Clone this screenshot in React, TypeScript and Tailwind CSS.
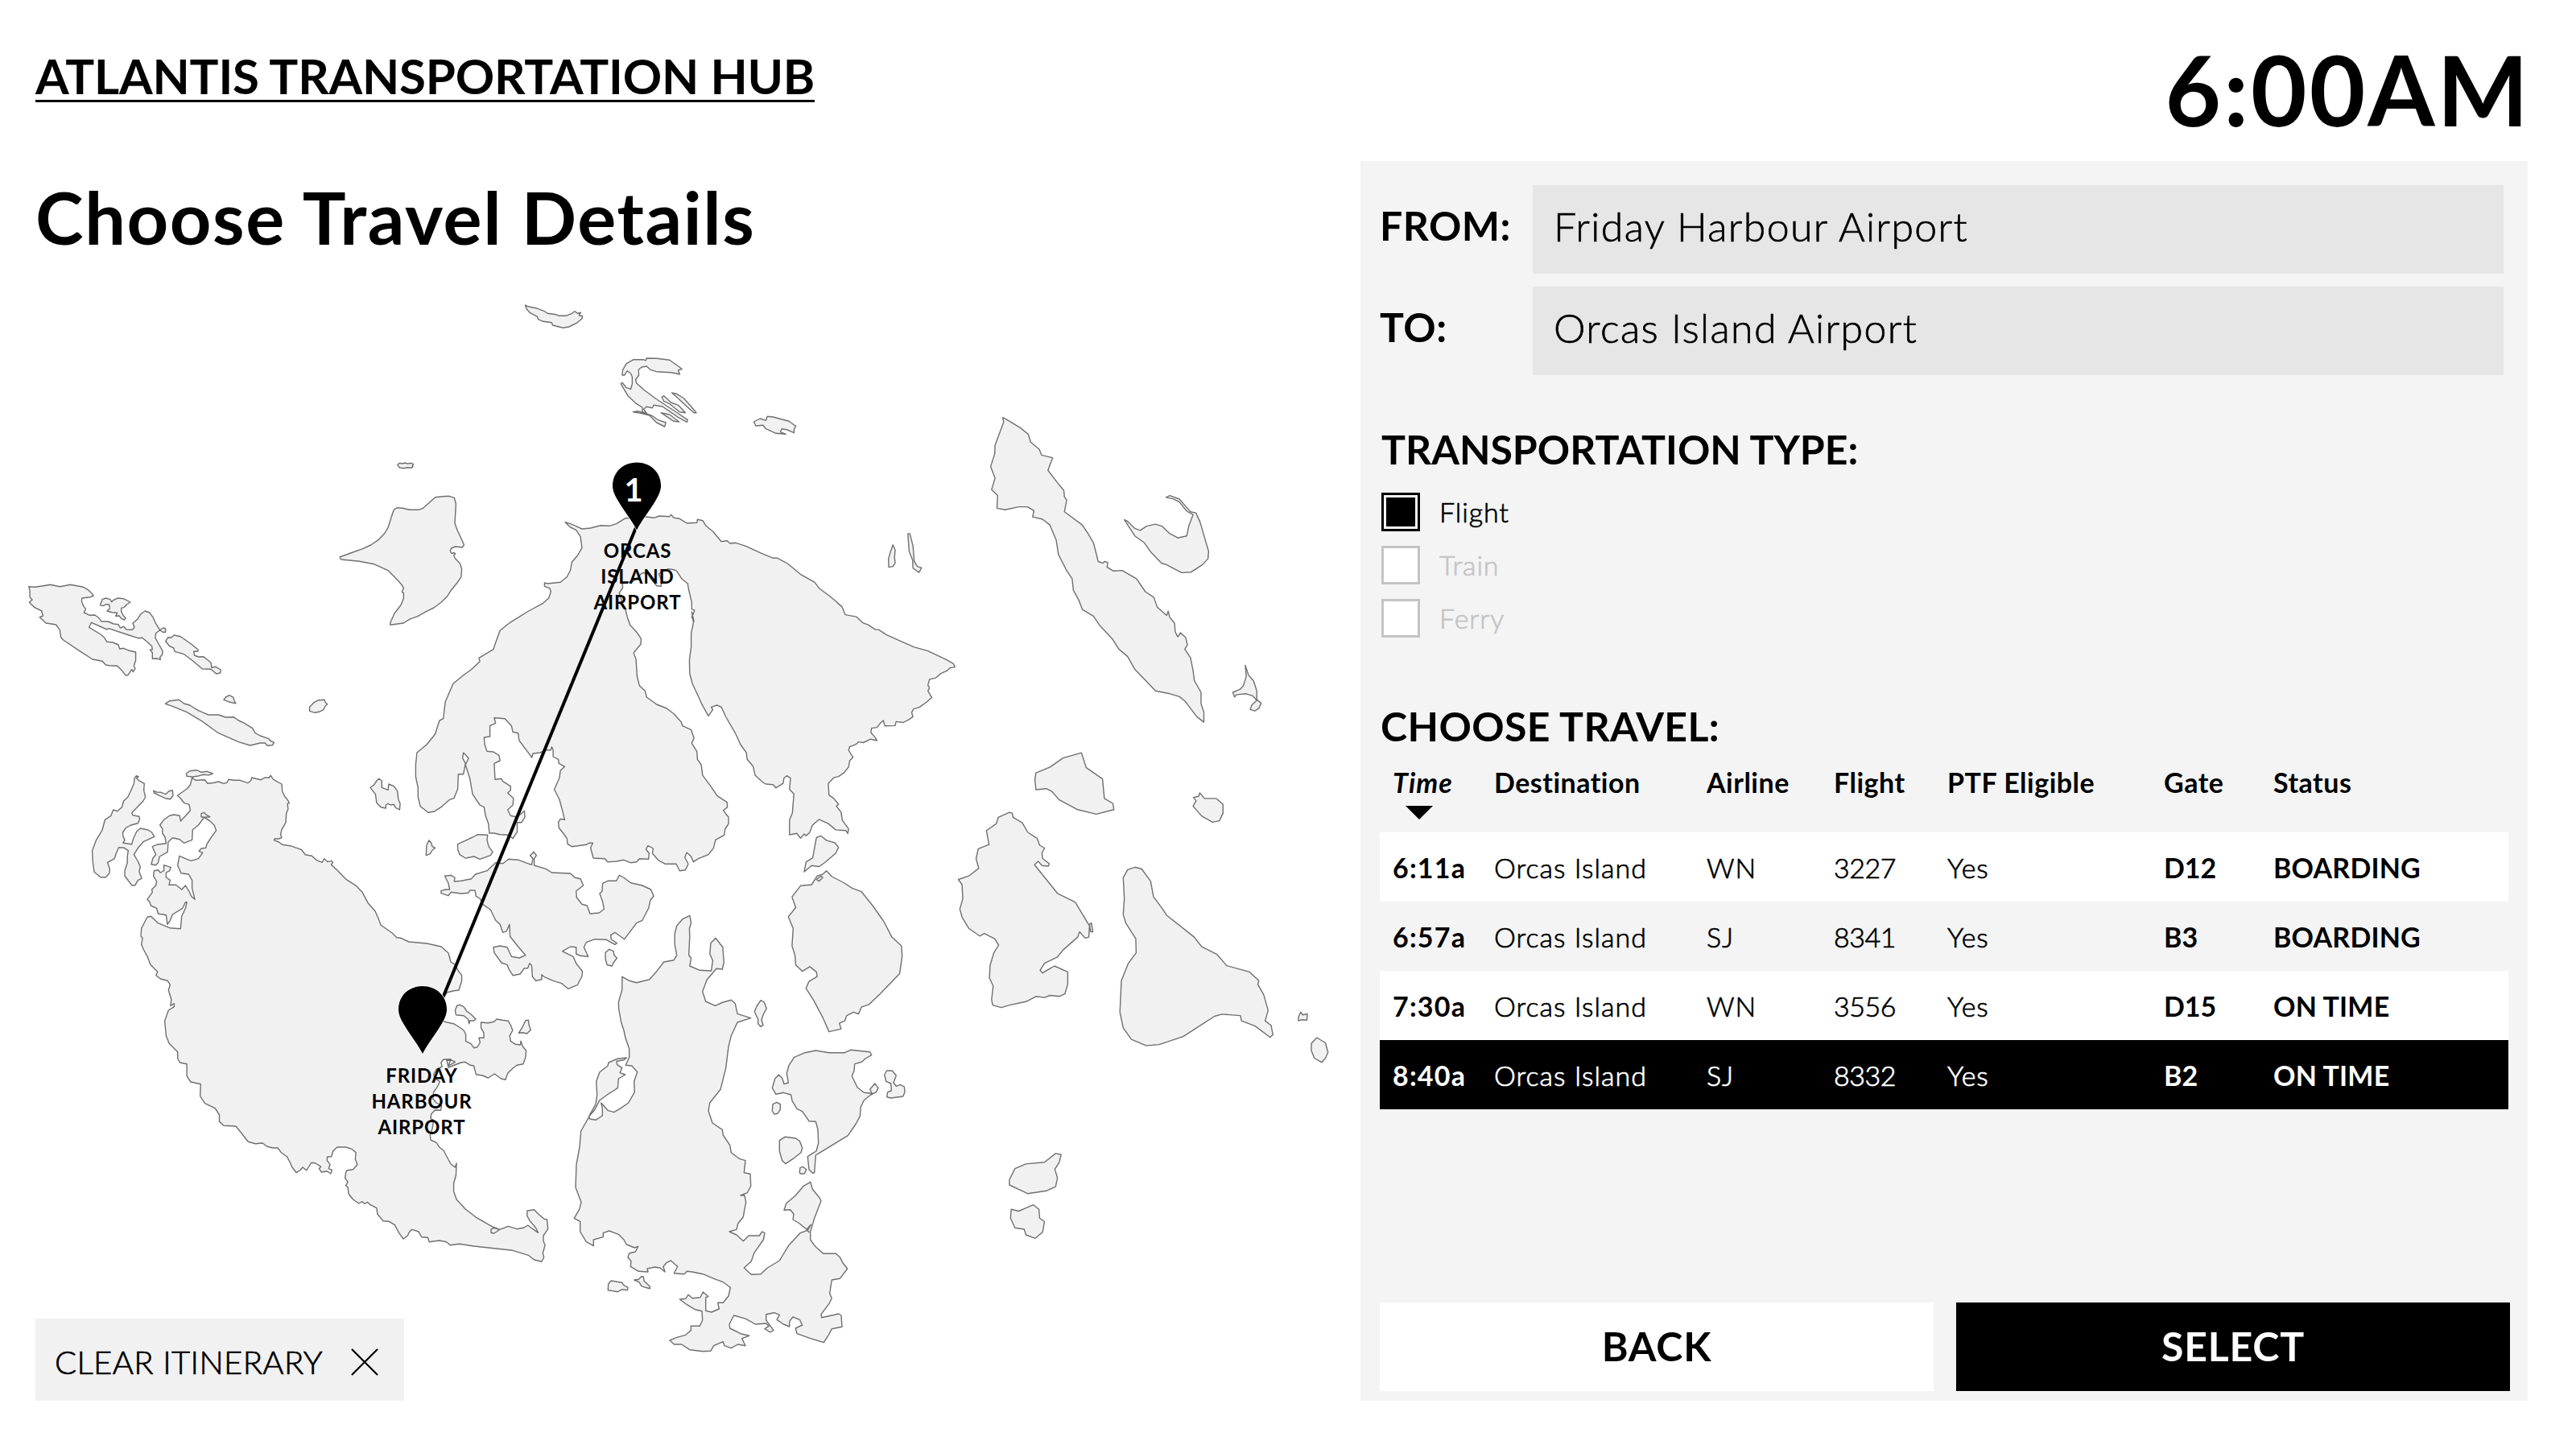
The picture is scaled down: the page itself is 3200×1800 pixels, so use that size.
import type { ReactNode } from "react";
import clsx from "clsx";

/* ---------- Coastline data ---------- */

// The chart is digitised on eight sheets. A sheet has its own origin and unit size.
type Sheet = [x: number, y: number, sx: number, sy: number];
const A: Sheet = [0, 360, 2.8, 3];
const B: Sheet = [480, 360, 2.8, 3];
const C: Sheet = [1040, 360, 2.529, 2.8];
const D: Sheet = [0, 760, 2.8, 3];
const E: Sheet = [480, 760, 2.8, 3];
const F: Sheet = [960, 880, 2.1778, 2.3059];
const G: Sheet = [160, 1180, 2.8, 3];
const H: Sheet = [660, 1180, 3, 3];

type Segment = [Sheet, string];

const toPath = (segments: Segment[]) => {
  const points: string[] = [];
  for (const [[ox, oy, sx, sy], text] of segments) {
    const n = text.trim().split(/\s+/).map(Number);
    for (let i = 0; i + 1 < n.length; i += 2) {
      points.push(`${(ox + n[i] / sx).toFixed(1)} ${(oy + n[i + 1] / sy).toFixed(1)}`);
    }
  }
  return `M${points.join("L")}Z`;
};

const LAND: Segment[][] = [
  // North-west islets
  [[A, "1383 652 1390 646 1400 648 1408 645 1418 648 1430 646 1438 650 1434 656 1437 659 1430 664 1416 662 1405 665 1390 663"]],
  // Stuart
  [
    [A, "1182 996 1220 981 1262 965 1290 951 1316 932 1336 910 1350 886 1358 858 1366 830 1372 818 1382 812 1400 814 1424 820 1456 820 1470 815 1484 802 1514 773"],
    [B, "195 770 218 769 236 775 242 798 238 870 246 895 264 935 270 950 264 960 240 957 226 963 222 973 226 982 236 980 240 984 234 990 240 1002 256 1020 262 1040 260 1070 246 1092 226 1118 212 1142 190 1165 165 1185 140 1198 110 1216 80 1228 60 1242 14 1249"],
    [A, "1357 1243 1362 1230 1372 1206 1394 1175 1404 1150 1404 1130 1398 1126 1404 1112 1398 1100 1384 1083 1350 1046 1300 1022 1250 1012 1186 1005"],
  ],
  // Western peninsula
  [
    [A, "100 1106 122 1108 150 1103 175 1099 208 1106 245 1099 290 1108 305 1117 318 1130 325 1140 315 1145 285 1149 284 1160 290 1178 298 1190 292 1203 312 1213 330 1212 345 1224 352 1236 375 1236 395 1245 412 1247 418 1260 430 1255 440 1266 460 1267 468 1258 462 1243 478 1228 490 1208 504 1197 520 1203 532 1220 540 1240 556 1268 568 1260 575 1262 576 1276 566 1276 556 1268 542 1280 540 1297 552 1320 565 1345"],
    [D, "565 158 556 170 558 178 545 174 530 175 530 152 522 142 530 140 528 128 515 115 495 97 480 98 440 84 378 62 372 66 318 40 310 58 350 84 362 95 372 112 392 114 412 123 416 138 430 136 450 145 472 150 472 180 466 200 470 212 463 224 458 215 445 236 436 236 425 220 408 202 380 200 368 198 356 184 322 177 280 148 220 105 212 95 208 68 195 48 160 42 138 20 150 15 145 0"],
    [A, "146 1197 120 1184 102 1165 112 1155 104 1145 104 1120"],
  ],
  [[A, "348 1175 356 1154 368 1149 384 1154 388 1163 395 1156 410 1149 430 1151 453 1164 440 1174 432 1183 422 1186 422 1200 430 1216 437 1224 432 1230 422 1225 415 1215 402 1216 408 1204 390 1202 372 1197 382 1188 380 1174 370 1172 358 1178"]],
  [[D, "576 110 585 95 596 96 605 87 628 92 645 105 665 120 690 142 688 148 674 148 676 162 690 168 708 167 734 190 736 208 750 205 768 216 766 228 752 231 734 214 704 213 670 182 640 158 608 148 604 135 590 128"]],
  [[D, "778 328 785 318 798 311 812 319 814 330 820 341 806 338 795 335"]],
  [[D, "575 343 590 332 622 328 640 342 660 348 690 368 725 384 760 384 785 393 812 392 830 405 850 415 878 434 888 452 905 462 935 473 940 480 953 487 948 497 930 499 922 489 905 489 870 498 830 485 760 452 700 406 650 374 600 352"]],
  [[D, "1077 370 1077 355 1092 338 1108 329 1128 328 1132 338 1139 344 1132 350 1125 365 1110 373 1095 376"]],
  [[D, "468 620 474 611 482 615 474 619 482 628 502 640 500 665 506 690 498 705 480 725 458 750 462 758 484 763 486 772 480 788 455 795 438 805 427 822 428 838 434 850 428 862 440 863 458 866 464 845 475 820 488 807 515 813 528 822 537 838 500 856 480 880 466 905 480 930 488 950 484 968 493 994 480 1000 470 1019 458 1019 445 1000 434 985 434 965 443 935 443 912 446 890 432 880 413 878 404 900 398 920 374 934 382 960 380 975 368 989 350 989 328 970 323 935 321 890 335 850 355 815 365 775 386 760 394 738 408 743 424 728 430 705 445 690 458 660 466 640"]],
  [[D, "534 667 545 672 560 673 576 680 588 668 600 665 602 685 592 698 575 695 555 685 536 675"]],
  [[D, "648 603 660 593 685 590 700 598 720 595 740 603 728 608 705 607 690 612 670 615 650 613"]],
  // San Juan
  [
    [D, "668 618 680 628 712 626 722 640 745 637 760 633 778 640 790 636 795 625 815 628 835 628 862 638 872 630 876 618 890 622 908 626 920 618 936 618 942 610 950 624 962 632 980 642 982 670 990 688 1000 700 1006 712 1000 716 1002 735 996 752 994 785 980 812 976 830 980 842 970 846 955 846 953 851 970 858 982 868 1010 872 1048 886 1062 905 1085 910 1100 925 1120 934 1128 920 1140 932 1152 928 1158 934 1152 942 1172 962 1205 998 1240 1022 1260 1045 1280 1085 1305 1116 1315 1140 1325 1168 1365 1198 1380 1214 1395 1216 1422 1230 1485 1236 1535 1248 1560 1272 1568 1305"],
    [E, "240 1315 248 1335 262 1355 262 1375 252 1410 235 1412 212 1418"],
    [G, "1106 160 1085 190 1070 230 1098 268 1130 275 1150 288 1165 300 1172 315 1172 340 1190 350 1200 365 1212 362 1222 345 1218 328 1235 328 1235 310 1225 290 1225 270 1250 272 1270 268 1280 258 1300 262 1320 265 1328 280 1335 300 1325 320 1328 340 1345 352 1362 354 1364 340 1370 360 1382 375 1380 400 1372 425 1350 430 1335 442 1318 460 1310 484 1295 480 1272 462 1250 477 1230 468 1208 464 1200 432 1188 430 1170 418 1155 420 1112 438 1106 412 1125 412 1135 418 1112 432 1120 407 1095 408 1086 420 1090 435 1070 445 1060 465 1065 480 1082 490 1075 508 1060 530 1058 555 1070 570 1088 580 1085 598 1065 597 1052 612 1050 628 1060 635 1056 665 1048 690 1050 708 1070 718 1080 735 1095 748 1105 768 1120 798 1135 810 1140 795 1138 840 1130 870 1130 900 1140 930 1170 965 1210 998 1262 1030 1290 1042 1280 1050 1270 1056 1260 1054 1260 1042 1268 1036 1290 1042 1320 1030 1350 1040 1375 1035 1388 1026 1405 1040 1424 1054 1415 1035 1395 1010 1385 990 1386 972 1410 968 1425 985 1445 1003 1455 1005 1458 1040 1442 1065 1442 1085 1448 1100 1440 1130 1444 1145 1436 1162 1410 1155 1390 1138 1335 1120 1270 1112 1200 1104 1150 1096 1118 1100 1105 1088 1080 1083 1045 1088 1040 1072 1018 1070 1008 1050 985 1042 975 1052 970 1065 955 1077 940 1055 925 1025 905 1012 885 1010 865 985 862 962 840 950 830 940 820 946 812 938 800 945 780 930 765 910 762 885 755 878 762 865 752 850 755 830 758 822 780 818 795 800 788 780 790 755 775 742 755 735 725 735 710 750 705 770 690 772 690 785 700 800 695 815 707 820 702 834 690 825 670 828 662 815 668 808 650 795 635 793 625 810 618 822 605 810 595 822 583 830 568 810 560 790 550 770 530 755 518 738 500 738 480 732 465 720 440 722 415 715 390 680 372 657 330 655 315 640 315 615 300 590 265 572 248 545 250 500 215 492 202 470 202 425 178 420 170 405 170 380 140 348 130 320 125 265 138 225 158 212 158 200 145 208 148 185 138 150 144 130 135 115 110 108 95 95 100 82 75 55 65 25 52 0"],
    [D, "492 1240 496 1215 490 1210 492 1180 512 1138 525 1135 550 1160 590 1178 628 1181 632 1135 645 1105 650 1082 645 1082 635 1105 600 1128 592 1150 582 1165 578 1130 550 1125 545 1105 525 1095 520 1080 512 1072 530 1045 528 1035 542 1020 545 1005 534 985 536 965 550 962 558 972 570 965 570 944 594 952 590 965 578 972 578 990 592 1000 588 1018 612 1018 632 1035 645 1020 658 1042 665 1060 678 1072 668 1030 668 1000 656 978 630 974 618 945 624 910 650 922 665 928 690 920 705 898 692 892 700 882 716 880 720 865 735 840 752 815 745 795 728 778 710 766 700 764 700 752 710 748 715 755 730 764 710 766 690 795 670 812 668 850 640 862 625 848 600 842 585 858 583 895 555 912 550 935 542 944 526 941 532 918 542 905 530 875 545 868 578 863 574 840 565 825 565 808 556 795 570 775 590 760 605 756 625 760 628 780 650 755 662 740 658 718 640 712 628 695 617 685 630 675 650 660 662 645"],
  ],
  [[G, "1135 225 1142 207 1152 205 1165 212 1175 228 1190 240 1207 258 1200 264 1186 264 1184 275 1180 258 1165 245 1138 242"]],
  [[G, "1356 310 1368 290 1380 263 1390 262 1392 280 1398 298 1385 312 1370 308"]],
  [[E, "138 908 140 870 148 851 156 862 160 875 170 880 160 888 152 902"]],
  [[E, "248 866 280 850 300 840 318 830 352 832 350 850 356 875 370 895 362 908 340 916 325 922 305 912 275 918 255 905 248 885"]],
  [[D, "1288 655 1300 646 1310 630 1318 622 1328 630 1328 655 1350 664 1352 642 1370 650 1382 668 1386 700 1392 715 1390 738 1376 730 1370 718 1358 720 1350 715 1342 720 1342 732 1325 728 1310 712 1306 680"]],
  // Orcas
  [
    [B, "622 866 640 872 658 880 680 891 710 888 745 878 775 880 800 872 832 851 870 850 905 846 930 850 950 843 985 845 990 838 1000 850 1020 853 1045 870 1080 868 1082 856 1100 860 1112 880 1135 900 1165 938 1185 935 1195 945 1215 943 1250 955 1300 980 1345 1000 1360 1000 1395 1020 1440 1060 1490 1090 1505 1112 1540 1140 1568 1165"],
    [C, "0 1088 15 1102 25 1130 60 1137 80 1158 97 1165 120 1182 130 1182 155 1200 240 1242 285 1256 340 1285 365 1300 370 1312 355 1315 345 1325 325 1335 310 1350 290 1355 285 1375 290 1385 285 1395 297 1418 280 1435 258 1452 240 1458 234 1470 238 1485 225 1495 208 1505 185 1502 182 1516 150 1517 145 1498 135 1508 125 1522 108 1525 106 1540 120 1558 125 1568"],
    [F, "265 88 245 98 232 96 225 103 208 110 205 120 217 140 208 150 205 168 192 185 178 195 165 198 150 215 152 248 165 258 178 275 172 280 185 298 188 320 205 345 203 358 198 350 170 348 150 330 125 318 107 335 100 355 90 365 85 360 75 372 65 358 45 362 45 320 53 300 57 245 45 232 48 200 38 193 30 200 28 215"],
    [E, "1355 656 1345 644 1320 642 1310 636 1283 610 1275 575 1255 550 1252 525 1232 495 1215 455 1180 390 1165 355 1150 348 1130 355 1135 365 1120 388 1095 340 1085 315 1065 270 1055 230 1054 180 1060 130 1060 80 1068 40 1062 0"],
    [B, "1070 1235 1062 1220 1072 1195 1062 1190 1062 1165 1050 1110 1048 1095 1028 1078 1010 1048 1000 1043 980 1040 955 1052 948 1060 958 1085 955 1105 940 1103 915 1070 910 1055 890 1055 860 1085 820 1095 822 1110 810 1130 820 1165 830 1185 838 1220 848 1250 870 1275 886 1300 885 1320 862 1350"],
    [E, "860 155 868 175 872 240 880 275 900 295 905 318 940 345 975 360 1000 380 1025 410 1030 425 1060 440 1070 470 1062 490 1080 520 1082 550 1095 570 1100 610 1128 650 1150 685 1185 710 1186 728 1172 740 1180 752 1190 765 1190 790 1178 810 1175 832 1145 850 1138 880 1120 905 1085 920 1068 932 1060 912 1045 897 1038 915 1050 940 1040 962 1020 965 1008 940 970 940 945 925 925 900 928 882 910 872 903 885 914 900 912 922 880 920 870 932 850 935 825 925 800 930 770 932 760 920 720 918 710 880 718 862 705 862 695 868 645 875 630 865 628 845 615 825 600 805 598 785 605 772 620 775 612 740 602 700 584 662 602 618 605 592 620 577 600 565 598 550 580 540 580 515 575 503 572 515 555 515 535 525 510 528 506 543 490 520 462 480 458 452 440 448 435 425 412 398 375 395 380 415 360 425 360 465 340 468 342 495 350 520 372 522 392 535 395 555 375 565 378 625 400 622 405 632 432 650 432 665 422 675 442 695 440 720 422 738 432 760 455 765 480 742 482 765 470 785 455 785 455 820 440 845 425 832 395 830 375 825 358 825 355 790 345 760 340 728 325 720 300 680 290 620 275 570 286 545 268 525 265 545 275 565 268 605 250 605 248 660 235 695 220 700 190 728 165 745 145 748 130 735 118 725 110 690 110 655 102 615 102 570 106 525 140 495 170 455 180 420 185 405 198 398 205 335 232 268 270 235 295 215 325 185 322 172 372 140 380 115 395 70 430 40 490 0"],
    [B, "545 1168 565 1148 572 1125 568 1112 550 1105 550 1092 560 1095 605 1090 628 1070 640 1045 645 1015 665 990 680 962 675 920 660 895 640 885"],
  ],
  // Shaw
  [[E, "203 985 225 982 238 990 236 1005 260 1003 295 995 310 978 350 965 380 935 405 938 425 922 460 925 505 943 510 920 500 908 512 895 522 908 514 920 514 945 555 958 575 972 640 975 655 990 675 995 685 1020 660 1040 662 1065 680 1090 698 1095 708 1125 740 1122 757 1108 752 1080 742 1050 750 1042 752 1012 770 1003 800 1003 810 982 825 990 850 1010 890 1020 920 1035 930 1060 918 1075 912 1105 890 1150 870 1160 828 1220 795 1195 780 1205 782 1220 802 1235 795 1240 765 1222 725 1220 695 1232 687 1250 702 1285 675 1282 660 1275 660 1250 640 1248 612 1265 650 1285 660 1310 682 1340 680 1358 665 1390 632 1405 610 1385 580 1375 548 1360 540 1352 540 1370 520 1375 508 1360 505 1318 498 1310 492 1328 480 1328 465 1350 440 1355 425 1330 420 1315 400 1308 375 1270 372 1250 395 1245 420 1250 435 1285 462 1290 484 1280 460 1250 430 1210 428 1165 418 1190 405 1195 395 1165 380 1150 362 1110 335 1090 325 1068 312 1060 308 1038 290 1038 285 1048 260 1050 225 1045 215 1058 190 1048 190 1040 205 1035 220 1035 215 1010"]],
  [[E, "762 1270 775 1258 790 1265 792 1280 802 1290 790 1308 785 1320 768 1316 762 1295"]],
  // Lopez
  [
    [E, "1055 1132 1030 1145 1010 1170 1003 1200 1003 1240 1010 1280 1000 1298 965 1305 940 1340 915 1370 870 1382 845 1375 820 1360"],
    [H, "338 150 325 195 326 220 335 270 345 300 350 325 365 370 365 400 352 430 375 432 395 455 383 490 385 530 362 570 330 592 308 605 285 598 260 570 265 590 265 618 240 634 218 630 215 622 185 675 180 735 168 800 165 885 186 940 180 965 160 1000 182 1012 182 1050 205 1088 232 1103 232 1080 268 1070 268 1055 290 1047 325 1060 345 1080 355 1098 385 1110 398 1105 388 1125 365 1130 360 1145 372 1160 370 1180 400 1198 435 1200 432 1188 460 1182 480 1185 498 1200 492 1180 505 1165 520 1158 545 1180 532 1205 570 1208 580 1198 600 1200 640 1208 680 1225 715 1238 742 1258 735 1290 715 1315 695 1315 700 1338 672 1350 650 1345 650 1295 660 1292 640 1275 630 1295 600 1298 585 1285 575 1300 553 1302 580 1322 610 1340 636 1346 638 1380 628 1402 595 1402 595 1418 575 1435 540 1445 516 1455 532 1470 560 1470 590 1490 640 1496 668 1495 680 1475 715 1460 720 1475 745 1484 770 1470 798 1475 785 1448 812 1438 780 1430 740 1410 738 1395 755 1362 800 1375 835 1395 875 1392 885 1402 870 1412 890 1425 903 1418 875 1380 875 1358 905 1352 925 1360 915 1378 940 1395 962 1404 962 1385 975 1368 1000 1378 1010 1398 985 1410 990 1430 1040 1448 1090 1463 1108 1435 1120 1412 1158 1405 1155 1362 1145 1356 1130 1360 1082 1370 1080 1358 1110 1318 1120 1298 1112 1280 1120 1230 1150 1225 1178 1188 1162 1168 1150 1145 1135 1132 1088 1132 1058 1105 1040 1080 1040 1050 1055 1000 1080 935 1075 925 1048 892 1040 865 1015 880 985 915 950 945 942 970 965 968 978 985 975 1005 1000 1020 1030 1045 1042 1024 1026 1042 1035 1052 1030 1045 1002 1055 960 1100 925 1158 880 1185 855 1208 820 1210 793 1185 820 1160 830 1130 865 1080 870 1055 860 1050 850 1065 810 1065 790 1085 765 1062 738 1050 765 1042 770 1020 790 995 795 965 800 940 795 915 780 915 805 905 818 880 816 835 793 830 798 785 775 778 745 755 740 728 715 690 712 670 675 645 660 600 665 570 705 520 725 440 735 360 745 320 768 270 818 254 768 238 760 200 745 187 715 195 685 208 650 192 638 155 655 110 690 70 712 72 718 45 714 0"],
    [E, "1170 1250 1145 1216 1128 1235 1125 1275 1135 1300 1130 1338 1090 1336 1055 1320 1060 1290 1052 1280 1055 1210 1054 1180 1060 1160"],
  ],
  [[H, "355 402 320 406 288 420 285 432 255 455 242 490 245 540 240 575 215 620 235 598 255 560 290 535 322 515 325 480 350 465 330 458 338 440 320 428 318 415 345 410"]],
  [[H, "286 1268 287 1245 298 1233 338 1240 345 1250 360 1258 358 1268 340 1265 322 1274"]],
  [[H, "383 1230 400 1228 410 1217 418 1218 420 1233 442 1255 442 1262 425 1258 410 1252 402 1238"]],
  [[H, "832 230 840 210 855 188 868 195 877 218 865 240 858 260 864 280 855 286 845 275 845 258"]],
  // Decatur
  [[H, "980 400 1020 383 1060 375 1110 383 1168 383 1190 373 1240 378 1262 380 1268 392 1245 405 1232 417 1205 425 1203 450 1195 470 1215 512 1240 532 1270 535 1262 520 1280 498 1293 515 1285 530 1265 540 1240 560 1228 585 1225 620 1210 648 1180 692 1060 765 1055 830 1048 832 1035 818 1030 770 1050 757 1062 750 1070 720 1068 670 1060 640 1035 638 1010 602 990 592 972 562 968 540 940 532 912 538 898 515 908 480 922 466 935 478 942 500 958 495 952 460 960 430"]],
  [[H, "898 600 900 575 915 568 928 575 928 595 918 610 905 612"]],
  [[H, "925 710 945 697 985 702 1000 712 1010 738 1005 755 980 775 948 797 935 785 925 750"]],
  [[H, "1000 828 1002 812 1012 808 1025 818 1018 834 1002 834"]],
  [[H, "1316 465 1325 450 1345 450 1360 468 1350 495 1360 508 1375 502 1390 510 1392 530 1385 546 1340 552 1325 548 1328 530 1342 525 1340 498 1322 490"]],
  // Blakely
  [[F, "145 465 160 482 190 498 215 515 240 525 270 565 300 610 322 655 348 680 350 710 343 760 320 785 290 818 260 848 240 855 232 875 218 870 200 880 195 895 180 902 185 918 152 926 135 885 110 835 90 802 98 782 120 768 118 755 100 740 80 753 62 735 60 708 52 680 55 630 42 597 62 570 52 540 75 508 105 505 120 480 135 475"]],
  [[F, "118 490 130 480 135 484 125 495"]],
  [[F, "85 468 90 440 108 428 118 370 130 365 145 378 168 385 178 398 170 415 140 442 125 453 105 450"]],
  // Cypress
  [[F, "640 298 648 300 650 312 675 328 690 355 715 372 722 392 735 400 728 415 730 430 748 445 745 452 728 450 718 438 708 448 740 490 770 530 818 555 855 620 862 615 866 640 860 640 857 620 855 655 845 658 830 640 825 655 785 692 770 712 735 730 723 750 730 758 750 745 762 738 798 755 798 790 790 818 775 825 750 822 735 828 712 825 685 840 640 850 618 857 595 850 592 835 596 795 586 772 588 735 598 700 611 678 600 660 572 645 560 652 530 630 512 598 506 575 514 545 512 505 502 490 530 480 557 458 550 430 556 402 585 390 578 350 605 330 610 312"]],
  [[F, "712 185 750 168 785 142 835 127 848 170 892 202 897 258 920 272 923 290 875 303 825 290 775 262 755 238 740 230 712 233 709 205"]],
  [[F, "1138 255 1152 252 1155 242 1168 258 1200 258 1218 275 1218 300 1208 322 1190 326 1160 308 1137 280 1145 265"]],
  // Guemes
  [[F, "948 485 960 462 980 455 998 460 1022 495 1030 540 1055 575 1065 592 1140 655 1160 682 1202 705 1228 737 1290 755 1315 780 1312 790 1328 820 1340 865 1332 895 1348 908 1353 935 1345 942 1305 910 1268 895 1265 880 1215 876 1195 882 1110 940 1045 963 1010 966 970 948 948 915 939 870 943 780 962 730 983 700 982 660 955 615 948 590 951 545"]],
  [[F, "1422 885 1428 870 1434 878 1446 875 1445 893 1430 892 1422 895"]],
  [[F, "1457 960 1472 943 1495 958 1502 985 1495 1002 1485 1014 1465 1002 1457 980"]],
  [[F, "640 1350 655 1318 685 1305 735 1300 765 1275 780 1278 775 1300 763 1320 770 1345 765 1370 740 1382 690 1390 640 1365"]],
  [[F, "645 1435 665 1440 705 1422 720 1435 722 1460 735 1470 730 1500 710 1518 685 1508 680 1492 655 1488 643 1460"]],
  // Lummi
  [[C, "520 444 530 450 575 480 600 502 608 530 635 555 642 575 677 584 662 628 690 668 712 698 714 720 721 732 714 772 770 818 788 848 805 880 812 910 820 945 835 951 840 945 850 948 848 965 868 978 895 976 940 1005 968 1050 995 1070 1005 1103 1035 1133 1040 1118 1045 1140 1060 1160 1062 1190 1070 1207 1078 1193 1095 1210 1100 1235 1092 1250 1110 1280 1118 1325 1122 1360 1143 1400 1143 1440 1152 1470 1152 1504 1130 1485 1092 1430 1075 1415 1045 1405 1000 1395 970 1360 935 1320 912 1275 885 1250 865 1215 825 1168 805 1135 770 1112 760 1082 742 1045 738 1005 720 975 695 920 688 870 668 818 645 798 614 790 618 768 598 755 570 755 528 765 502 760 504 715 485 695 496 655 482 615 495 570 496 540 523 460"]],
  [[C, "902 800 912 805 935 830 952 837 972 822 1000 815 1020 822 1045 848 1070 863 1098 856 1105 820 1118 782 1098 770 1075 738 1055 727 1033 722 1045 716 1075 728 1100 760 1110 772 1127 776 1140 808 1155 865 1167 910 1165 935 1148 956 1112 982 1082 984 1030 954 1020 952 985 912 965 880 935 856"]],
  [[C, "175 887 182 905 180 930 182 950 175 962 162 965 161 935 168 910"]],
  [[C, "222 848 228 848 238 890 242 945 252 962 265 967 257 983 238 968 237 940 226 910"]],
  [[C, "1282 1306 1292 1340 1308 1360 1318 1395 1318 1425 1332 1438 1325 1455 1312 1465 1298 1460 1302 1445 1318 1428 1305 1412 1285 1405 1255 1408 1248 1416 1243 1400 1265 1390 1276 1378 1285 1345"]],
  // Sucia and its neighbours
  [[B, "483 57 492 62 520 68 550 80 560 88 590 92 600 97 625 97 645 88 655 80 665 88 676 85 670 95 682 98 680 108 660 125 635 138 615 142 578 132 575 122 545 118 528 110 525 100 500 86 488 72"]],
  [[B, "820 318 822 298 835 275 860 260 895 260 902 264 905 255 940 256 985 262 1028 295 1015 300 1020 315 1010 312 990 308 940 305 918 298 905 285 888 288 877 298 878 318 867 335 870 348 895 372 940 408 1000 450 1048 485 1045 493 1015 475 960 435 930 430 925 440 905 436 895 445 905 460 890 455 890 438 870 425 840 395 815 350 820 346 835 365 850 370 855 350 855 325 850 312 838 302 828 318"]],
  [[B, "858 455 875 452 905 462 925 470 945 485 972 495 968 510 940 495 915 468 885 460"]],
  [[B, "958 400 965 395 975 405 990 420 1015 430 1040 458 1020 455 985 425 965 415"]],
  [[B, "993 384 1010 388 1035 405 1060 435 1078 458 1070 458 1045 435 1010 400"]],
  [[B, "955 458 985 465 1018 492 1000 490"]],
  [[B, "1278 492 1300 480 1320 487 1325 472 1345 474 1400 490 1424 508 1418 520 1418 533 1395 522 1375 518 1370 530 1390 538 1355 535 1320 518 1310 505 1285 507"]],
];

const LAND_PATHS = LAND.map(toPath);

function MapPin({ x, y, label }: { x: number; y: number; label?: string }) {
  return (
    <g transform={`translate(${x} ${y})`}>
      <path
        d="M0 84C-6 72-16 60-23 48C-28 40-30 34-30 29C-30 12-17 0 0 0C17 0 30 12 30 29C30 34 28 40 23 48C16 60 6 72 0 84Z"
        fill="#000"
        stroke="#fff"
        strokeWidth="1.5"
        paintOrder="stroke"
      />
      {label && (
        <text x="-4" y="48" textAnchor="middle" fill="#fff" className="text-[40px] font-bold">
          {label}
        </text>
      )}
    </g>
  );
}

function IslandMap() {
  return (
    <svg className="absolute inset-0 h-[1600px] w-[1690px]" viewBox="0 200 1690 1600">
      <g fill="#f1f1f1" stroke="#6f6f6f" strokeWidth="1.4" strokeLinejoin="round">
        {LAND_PATHS.map((d, i) => (
          <path key={i} d={d} />
        ))}
      </g>
      <line x1="791" y1="653" x2="540" y2="1264" stroke="#000" strokeWidth="4" />
      <MapPin x={791} y={574.5} label="1" />
      <MapPin x={525} y={1225} />
    </svg>
  );
}

function PinLabel({ lines, className }: { lines: string[]; className: string }) {
  return (
    <p className={clsx("absolute w-[200px] text-center text-[24px] leading-[32px] font-bold tracking-[0.85px]", className)}>
      {lines.map((line) => (
        <span key={line} className="block">
          {line}
        </span>
      ))}
    </p>
  );
}

/* ---------- Side panel ---------- */

const LIGHT = "font-light [-webkit-text-stroke:0.7px_currentColor]";

function Field({ label, value }: { label: string; value: string }) {
  return (
    <div className="flex h-[110px]">
      <div className="flex w-[190px] items-center pb-[10px] text-[50px] leading-[60px] font-bold tracking-[0.5px]">{label}</div>
      <div className={clsx("flex flex-1 items-center bg-[#e6e6e6] pb-[8px] pl-[26px] text-[50px] leading-[60px] tracking-[1.35px]", LIGHT)}>
        {value}
      </div>
    </div>
  );
}

function Option({ label, checked = false }: { label: string; checked?: boolean }) {
  return (
    <div className={clsx("flex h-[48px] items-center", checked ? "text-black" : "text-[#c4c4c4]")}>
      <span className={clsx("size-[48px] border-[3px] border-current p-[3px]", !checked && "bg-white")}>
        {checked && <span className="block size-full bg-black" />}
      </span>
      <span className={clsx("pl-[24px] text-[34px] leading-[48px] tracking-[0.9px]", LIGHT)}>{label}</span>
    </div>
  );
}

const COLUMNS = "grid grid-cols-[142px_264px_158px_141px_269px_136px_1fr]";

const FLIGHTS = [
  { time: "6:11a", to: "Orcas Island", airline: "WN", flight: "3227", ptf: "Yes", gate: "D12", status: "BOARDING" },
  { time: "6:57a", to: "Orcas Island", airline: "SJ", flight: "8341", ptf: "Yes", gate: "B3", status: "BOARDING" },
  { time: "7:30a", to: "Orcas Island", airline: "WN", flight: "3556", ptf: "Yes", gate: "D15", status: "ON TIME" },
  { time: "8:40a", to: "Orcas Island", airline: "SJ", flight: "8332", ptf: "Yes", gate: "B2", status: "ON TIME" },
];

const ROW_STYLES = ["bg-white", "", "bg-white", "bg-black text-white"];

function Light({ children, className = "tracking-[1px]" }: { children: ReactNode; className?: string }) {
  return <span className={clsx(LIGHT, className)}>{children}</span>;
}

function FlightTable() {
  return (
    <div className="w-[1402px] text-[34px] leading-[40px] font-bold">
      <div className={clsx(COLUMNS, "h-[83px] pt-px tracking-[0.5px]")}>
        <div className="pl-[16px] italic">
          <span className="tracking-[1px]">Time</span>
          <svg className="mt-[9px] ml-[16px] block h-[17px] w-[34px]" viewBox="0 0 34 17">
            <path d="M0 0H34L17 17Z" />
          </svg>
        </div>
        <span>Destination</span>
        <span>Airline</span>
        <span>Flight</span>
        <span>PTF Eligible</span>
        <span>Gate</span>
        <span>Status</span>
      </div>
      {FLIGHTS.map((f, i) => (
        <div key={f.time} className={clsx(COLUMNS, "h-[86px] items-center pt-px", ROW_STYLES[i])}>
          <span className="pl-[16px] tracking-[1.2px]">{f.time}</span>
          <Light>{f.to}</Light>
          <Light>{f.airline}</Light>
          <Light className="tracking-[-0.5px]">{f.flight}</Light>
          <Light>{f.ptf}</Light>
          <span>{f.gate}</span>
          <span className="tracking-[0.2px]">{f.status}</span>
        </div>
      ))}
    </div>
  );
}

/* ---------- Page ---------- */

export default function App() {
  return (
    <main className="flex h-[1800px] w-[3200px] flex-col overflow-hidden bg-white font-[Lato,sans-serif] text-black [font-variant-ligatures:none]">
      <header className="flex h-[200px] justify-between pr-[56px] pl-[44px]">
        <div className="mt-[64px] h-[63px] border-b-[3px] border-black text-[60px] leading-[60px] font-bold tracking-[-0.18px]">
          ATLANTIS TRANSPORTATION HUB
        </div>
        <div className="mt-[51px] text-[120px] leading-[120px] font-bold tracking-[3px]">6:00AM</div>
      </header>

      <div className="flex h-[1600px]">
        <section className="relative flex w-[1690px] flex-col items-start pl-[44px]">
          <IslandMap />
          <PinLabel className="top-[468px] left-[692px]" lines={["ORCAS", "ISLAND", "AIRPORT"]} />
          <PinLabel className="top-[1120px] left-[424px]" lines={["FRIDAY", "HARBOUR", "AIRPORT"]} />
          <h1 className="relative mt-[24px] text-[90px] leading-[90px] font-bold tracking-[1.6px]">Choose Travel Details</h1>
          <button className={clsx("relative mt-auto mb-[60px] flex h-[102px] w-[458px] items-center justify-between bg-[#f1f1f1] pt-[5px] pr-[31px] pl-[24px] text-[40px] leading-[48px] tracking-[0.4px]", LIGHT)}>
            CLEAR ITINERARY
            <svg className="size-[36px]" viewBox="0 0 36 36" stroke="#000" strokeWidth="2.2">
              <path d="M2 2L34 34M34 2L2 34" />
            </svg>
          </button>
        </section>

        <aside className="flex h-[1540px] w-[1450px] flex-col bg-[#f4f4f4] pt-[30px] pl-[24px]">
          <div className="flex w-[1396px] flex-col gap-[16px]">
            <Field label="FROM:" value="Friday Harbour Airport" />
            <Field label="TO:" value="Orcas Island Airport" />
          </div>

          <h2 className="mt-[62px] pl-[2px] text-[50px] leading-[60px] font-bold">TRANSPORTATION TYPE:</h2>
          <div className="mt-[24px] flex flex-col gap-[18px] pl-[2px]">
            <Option label="Flight" checked />
            <Option label="Train" />
            <Option label="Ferry" />
          </div>

          <h2 className="mt-[80px] pl-px text-[50px] leading-[60px] font-bold tracking-[0.4px]">CHOOSE TRAVEL:</h2>
          <div className="mt-[19px]">
            <FlightTable />
          </div>

          <div className="mt-[240px] flex gap-[28px] text-[50px] leading-[60px] tracking-[0.8px]">
            <button className="flex h-[110px] w-[688px] items-center justify-center bg-white pb-[2px] font-bold">BACK</button>
            <button className="flex h-[110px] w-[688px] items-center justify-center bg-black pb-[2px] font-bold text-white">SELECT</button>
          </div>
        </aside>
      </div>
    </main>
  );
}
